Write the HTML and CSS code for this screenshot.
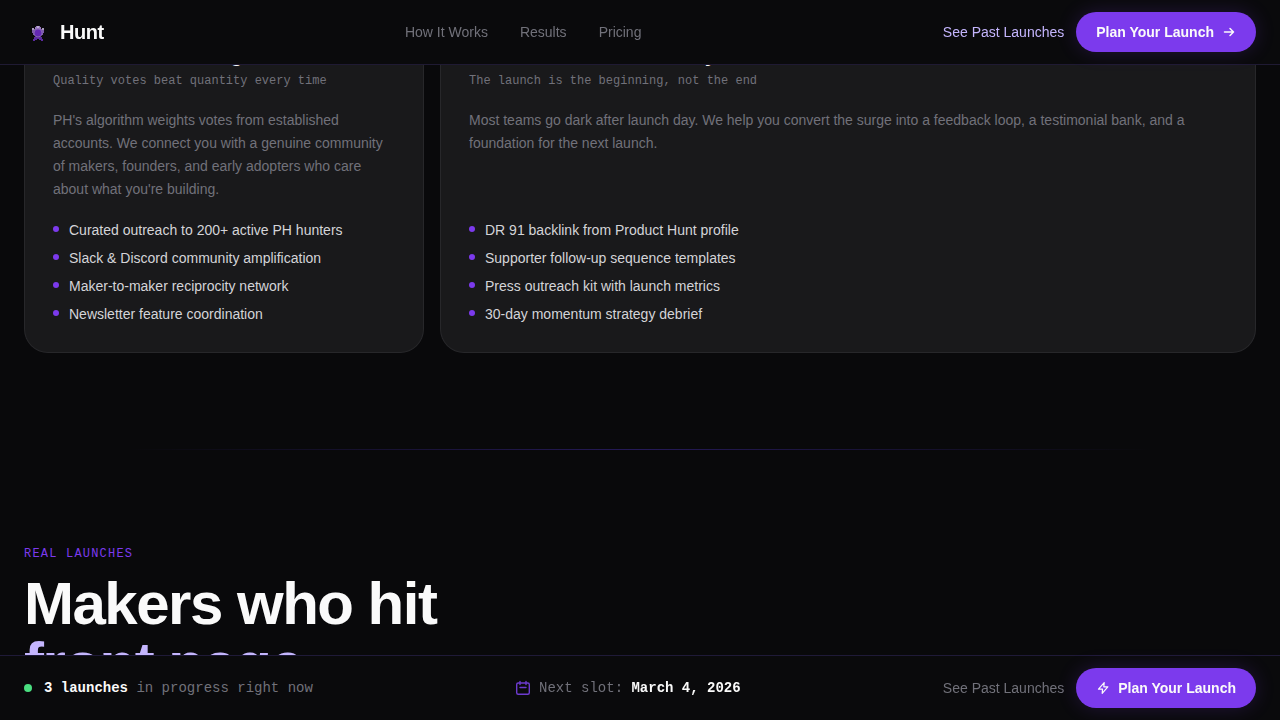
FILE: index.html
```html
<!DOCTYPE html>
<html lang="en">
<head>
    <meta charset="UTF-8">
    <meta name="viewport" content="width=device-width, initial-scale=1.0">
    <title>Hunt</title>
    <link rel="stylesheet" href="styles.css">
</head>
<body>
    <header class="navbar">
        <a class="brand" href="#">
            <svg class="brand-logo" viewBox="0 0 28 28" aria-hidden="true">
                <path fill="#5b2aa0" d="M10 19h8v2h1v2h-2v-1h-2v-1h-2v1h-2v1H9v-2h1z"/>
                <path fill="#7d5ca8" d="M8 11h3v6H9v-2H8zM17 11h3v4h-1v2h-2z"/>
                <path fill="#a99bbd" d="M8 10h2v2H8zM18 10h2v2h-2z"/>
                <path fill="#9678bd" d="M12 8h4v1h1v3h-6V9h1z"/>
                <circle cx="14" cy="15" r="4" fill="#6427b5" stroke="#8562b5"/>
                <path fill="#b9a9cf" d="M13 8h2v2h-2z"/>
            </svg>
            <span>Hunt</span>
        </a>
        <nav class="nav-links">
            <a href="#how">How It Works</a>
            <a href="#results">Results</a>
            <a href="#pricing">Pricing</a>
        </nav>
        <div class="actions">
            <a class="past-link" href="#results">See Past Launches</a>
            <button class="btn" type="button">
                Plan Your Launch
                <svg width="14" height="14" viewBox="0 0 14 14" fill="none" aria-hidden="true">
                    <path d="M2.5 7h9M8 3.5L11.5 7 8 10.5" stroke="currentColor" stroke-width="1.5" stroke-linecap="round" stroke-linejoin="round"/>
                </svg>
            </button>
        </div>
    </header>

    <main>
        <section class="cards" id="how">
            <article class="card">
                <h3>Active Maker Voting</h3>
                <p class="tagline">Quality votes beat quantity every time</p>
                <p class="description">PH's algorithm weights votes from established accounts. We connect you with a genuine community of makers, founders, and early adopters who care about what you're building.</p>
                <ul>
                    <li>Curated outreach to 200+ active PH hunters</li>
                    <li>Slack &amp; Discord community amplification</li>
                    <li>Maker-to-maker reciprocity network</li>
                    <li>Newsletter feature coordination</li>
                </ul>
            </article>
            <article class="card card-wide">
                <h3>Momentum After This Day</h3>
                <p class="tagline">The launch is the beginning, not the end</p>
                <p class="description">Most teams go dark after launch day. We help you convert the surge into a feedback loop, a testimonial bank, and a foundation for the next launch.</p>
                <ul>
                    <li>DR 91 backlink from Product Hunt profile</li>
                    <li>Supporter follow-up sequence templates</li>
                    <li>Press outreach kit with launch metrics</li>
                    <li>30-day momentum strategy debrief</li>
                </ul>
            </article>
        </section>

        <hr class="divider">

        <section class="launches" id="results">
            <p class="eyebrow">Real Launches</p>
            <h2>Makers who hit<br><span>front page.</span></h2>
        </section>
    </main>

    <footer class="launch-bar">
        <p class="status"><span class="dot"></span><span><strong>3 launches</strong> in progress right now</span></p>
        <p class="slot">
            <svg width="16" height="16" viewBox="0 0 16 16" fill="none" aria-hidden="true">
                <rect x="1.7" y="3" width="12.6" height="11.3" rx="1.5" stroke="currentColor" stroke-width="1.4"/>
                <path d="M5 1.5v3M11 1.5v3M5 7.5h6" stroke="currentColor" stroke-width="1.4" stroke-linecap="round"/>
            </svg>
            <span>Next slot: <strong>March 4, 2026</strong></span>
        </p>
        <div class="actions">
            <a class="past-link muted" href="#results">See Past Launches</a>
            <button class="btn" type="button">
                <svg width="14" height="14" viewBox="0 0 14 14" fill="none" aria-hidden="true">
                    <path d="M8.2 1.6L2.5 8.2h4l-.3 4.2L11.8 5.8h-4z" stroke="currentColor" stroke-width="1.2" stroke-linejoin="round"/>
                </svg>
                Plan Your Launch
            </button>
        </div>
    </footer>
</body>
</html>
```

FILE: styles.css
```css
* {
    box-sizing: border-box;
    margin: 0;
    padding: 0;
}

body {
    height: 100vh;
    overflow: hidden;
    background: #09090b;
    color: #fafafa;
    font-family: "Liberation Sans", Arial, sans-serif;
    font-size: 14px;
    line-height: 20px;
}

a {
    color: inherit;
    text-decoration: none;
}

/* Fixed bars */
.navbar,
.launch-bar {
    position: fixed;
    left: 0;
    right: 0;
    z-index: 10;
    display: flex;
    align-items: center;
    justify-content: space-between;
    height: 65px;
    padding: 0 24px;
    background: #0a0a0c;
}

.navbar {
    top: 0;
    border-bottom: 1px solid #1f1a33;
}

.launch-bar {
    bottom: 0;
    border-top: 1px solid #1f1a38;
    color: #71717a;
}

.brand {
    display: flex;
    align-items: center;
    gap: 8px;
    font-size: 20px;
    font-weight: bold;
    letter-spacing: -0.5px;
}

.brand-logo {
    width: 28px;
    height: 28px;
}

.nav-links {
    display: flex;
    gap: 32px;
    color: #71717a;
}

.actions {
    display: flex;
    align-items: center;
    gap: 12px;
}

.past-link {
    color: #c4b5fd;
}

.past-link.muted {
    color: #71717a;
}

.btn {
    display: flex;
    align-items: center;
    gap: 8px;
    height: 40px;
    padding: 0 20px;
    border: none;
    border-radius: 20px;
    background: #7c3aed;
    box-shadow: 0 0 20px rgba(124, 58, 237, 0.2);
    color: #fafafa;
    font: bold 14px "Liberation Sans", Arial, sans-serif;
    cursor: pointer;
}

/* Feature cards */
.cards {
    display: grid;
    grid-template-columns: repeat(3, 1fr);
    gap: 16px;
    padding: 0 24px;
}

.card {
    display: flex;
    flex-direction: column;
    padding: 41px 28px 28px;
    border: 1px solid #27272a;
    border-top: none;
    border-radius: 0 0 24px 24px;
    background: #19191b;
}

.card-wide {
    grid-column: span 2;
}

.card h3 {
    margin-bottom: 4px;
    font-size: 20px;
    line-height: 28px;
}

.tagline {
    margin-bottom: 20px;
    color: #71717a;
    font-family: "Liberation Mono", "Courier New", monospace;
    font-size: 12px;
    line-height: 16px;
}

.description {
    margin-bottom: 19px;
    color: #71717a;
    line-height: 23px;
}

.card ul {
    display: flex;
    flex-direction: column;
    gap: 8px;
    margin-top: auto;
    list-style: none;
}

.card li {
    display: flex;
    align-items: flex-start;
    gap: 10px;
    color: #d4d4d8;
}

.card li::before {
    content: "";
    width: 6px;
    height: 6px;
    margin-top: 6px;
    border-radius: 50%;
    background: #7c3aed;
}

.divider {
    height: 1px;
    margin: 96px 0;
    border: none;
    background: linear-gradient(90deg, transparent 10%, #251a58 50%, transparent 90%);
}

/* Real launches */
.launches {
    padding: 0 24px;
}

.eyebrow {
    margin-bottom: 12px;
    color: #7c3aed;
    font-family: "Liberation Mono", "Courier New", monospace;
    font-size: 12px;
    line-height: 16px;
    letter-spacing: 1.2px;
    text-transform: uppercase;
}

.launches h2 {
    font-size: 60px;
    line-height: 60px;
    letter-spacing: -1.5px;
}

.launches h2 span {
    color: #c4b5fd;
}

/* Bottom bar */
.status,
.slot {
    display: flex;
    align-items: center;
    font-family: "Liberation Mono", "Courier New", monospace;
}

.status {
    gap: 12px;
}

.slot {
    gap: 8px;
}

.launch-bar strong {
    color: #fafafa;
}

.dot {
    width: 8px;
    height: 8px;
    border-radius: 50%;
    background: #4ade80;
}

.slot svg {
    color: #6d3bd0;
}
```
